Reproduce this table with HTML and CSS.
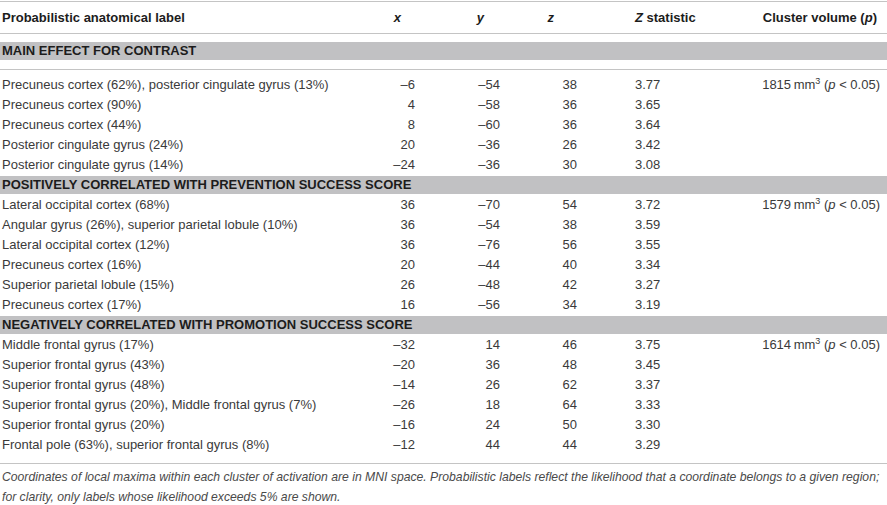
FILE: index.html
```html
<!DOCTYPE html>
<html lang="en">

<head>
    <meta charset="UTF-8">
    <title>Probabilistic anatomical labels</title>
    <link rel="stylesheet" href="styles.css">
</head>

<body>

    <div class="table">

        <div class="row head">
            <div class="label">Probabilistic anatomical label</div>
            <div class="h-x"><i>x</i></div>
            <div class="h-y"><i>y</i></div>
            <div class="h-z"><i>z</i></div>
            <div class="h-stat"><i>Z</i> statistic</div>
            <div class="h-vol">Cluster volume (<i>p</i>)</div>
        </div>

        <div class="first-band">
            <div class="band">MAIN EFFECT FOR CONTRAST</div>
        </div>

        <div class="body">
            <div class="row">
                <div class="label">Precuneus cortex (62%), posterior cingulate gyrus (13%)</div>
                <div class="num">–6</div><div class="num">–54</div><div class="num">38</div>
                <div class="stat">3.77</div>
                <div class="vol">1815&thinsp;mm<sup>3</sup> (<i>p</i> &lt; 0.05)</div>
            </div>
            <div class="row">
                <div class="label">Precuneus cortex (90%)</div>
                <div class="num">4</div><div class="num">–58</div><div class="num">36</div>
                <div class="stat">3.65</div><div class="vol"></div>
            </div>
            <div class="row">
                <div class="label">Precuneus cortex (44%)</div>
                <div class="num">8</div><div class="num">–60</div><div class="num">36</div>
                <div class="stat">3.64</div><div class="vol"></div>
            </div>
            <div class="row">
                <div class="label">Posterior cingulate gyrus (24%)</div>
                <div class="num">20</div><div class="num">–36</div><div class="num">26</div>
                <div class="stat">3.42</div><div class="vol"></div>
            </div>
            <div class="row">
                <div class="label">Posterior cingulate gyrus (14%)</div>
                <div class="num">–24</div><div class="num">–36</div><div class="num">30</div>
                <div class="stat">3.08</div><div class="vol"></div>
            </div>

            <div class="band">POSITIVELY CORRELATED WITH PREVENTION SUCCESS SCORE</div>

            <div class="row">
                <div class="label">Lateral occipital cortex (68%)</div>
                <div class="num">36</div><div class="num">–70</div><div class="num">54</div>
                <div class="stat">3.72</div>
                <div class="vol">1579&thinsp;mm<sup>3</sup> (<i>p</i> &lt; 0.05)</div>
            </div>
            <div class="row">
                <div class="label">Angular gyrus (26%), superior parietal lobule (10%)</div>
                <div class="num">36</div><div class="num">–54</div><div class="num">38</div>
                <div class="stat">3.59</div><div class="vol"></div>
            </div>
            <div class="row">
                <div class="label">Lateral occipital cortex (12%)</div>
                <div class="num">36</div><div class="num">–76</div><div class="num">56</div>
                <div class="stat">3.55</div><div class="vol"></div>
            </div>
            <div class="row">
                <div class="label">Precuneus cortex (16%)</div>
                <div class="num">20</div><div class="num">–44</div><div class="num">40</div>
                <div class="stat">3.34</div><div class="vol"></div>
            </div>
            <div class="row">
                <div class="label">Superior parietal lobule (15%)</div>
                <div class="num">26</div><div class="num">–48</div><div class="num">42</div>
                <div class="stat">3.27</div><div class="vol"></div>
            </div>
            <div class="row">
                <div class="label">Precuneus cortex (17%)</div>
                <div class="num">16</div><div class="num">–56</div><div class="num">34</div>
                <div class="stat">3.19</div><div class="vol"></div>
            </div>

            <div class="band">NEGATIVELY CORRELATED WITH PROMOTION SUCCESS SCORE</div>

            <div class="row">
                <div class="label">Middle frontal gyrus (17%)</div>
                <div class="num">–32</div><div class="num">14</div><div class="num">46</div>
                <div class="stat">3.75</div>
                <div class="vol">1614&thinsp;mm<sup>3</sup> (<i>p</i> &lt; 0.05)</div>
            </div>
            <div class="row">
                <div class="label">Superior frontal gyrus (43%)</div>
                <div class="num">–20</div><div class="num">36</div><div class="num">48</div>
                <div class="stat">3.45</div><div class="vol"></div>
            </div>
            <div class="row">
                <div class="label">Superior frontal gyrus (48%)</div>
                <div class="num">–14</div><div class="num">26</div><div class="num">62</div>
                <div class="stat">3.37</div><div class="vol"></div>
            </div>
            <div class="row">
                <div class="label">Superior frontal gyrus (20%), Middle frontal gyrus (7%)</div>
                <div class="num">–26</div><div class="num">18</div><div class="num">64</div>
                <div class="stat">3.33</div><div class="vol"></div>
            </div>
            <div class="row">
                <div class="label">Superior frontal gyrus (20%)</div>
                <div class="num">–16</div><div class="num">24</div><div class="num">50</div>
                <div class="stat">3.30</div><div class="vol"></div>
            </div>
            <div class="row">
                <div class="label">Frontal pole (63%), superior frontal gyrus (8%)</div>
                <div class="num">–12</div><div class="num">44</div><div class="num">44</div>
                <div class="stat">3.29</div><div class="vol"></div>
            </div>
        </div>

        <p class="note">Coordinates of local maxima within each cluster of activation are in MNI space. Probabilistic labels reflect the likelihood that a coordinate belongs to a given region; for clarity, only labels whose likelihood exceeds 5% are shown.</p>

    </div>

</body>

</html>
```

FILE: styles.css
```css
body {
    margin: 0;
    background: #fff;
    font-family: "Liberation Sans", Arial, sans-serif;
    font-size: 13px;
    color: #3a3a3a;
}

.table {
    width: 887px;
    padding-top: 1px;
}

.row {
    display: grid;
    grid-template-columns: 370px 60px 85px 77px 128px 1fr;
    height: 20px;
    line-height: 20px;
    white-space: nowrap;
}

.label {
    padding-left: 2px;
}

.num {
    text-align: right;
    padding-right: 15px;
}

.stat {
    padding-left: 43px;
}

.vol {
    text-align: right;
    padding-right: 7px;
}

.vol sup {
    font-size: 9px;
    line-height: 0;
}

/* header row */
.head {
    height: 31px;
    line-height: 31px;
    border-top: 1px solid #c4c4c4;
    border-bottom: 1px solid #c4c4c4;
    font-weight: bold;
    color: #1c1c1c;
}

.h-x { text-align: right; padding-right: 29px; }
.h-y { text-align: right; padding-right: 31px; }
.h-z { text-align: right; padding-right: 38px; }
.h-stat { padding-left: 43px; }
.h-vol { text-align: right; padding-right: 10px; }

/* section bands */
.band {
    height: 18px;
    line-height: 18px;
    margin: 1px 0;
    padding-left: 2px;
    background: #c1c1c3;
    font-weight: bold;
    color: #1c1c1c;
}

.first-band {
    padding: 7px 0 8px;
    border-bottom: 1px solid #c4c4c4;
}

.body {
    padding-top: 5px;
    padding-bottom: 8px;
    border-bottom: 1px solid #c4c4c4;
}

.note {
    margin: 3px 0 0;
    padding-left: 2px;
    font-size: 12.2px;
    line-height: 20px;
    font-style: italic;
    color: #4a4a4a;
}
```
